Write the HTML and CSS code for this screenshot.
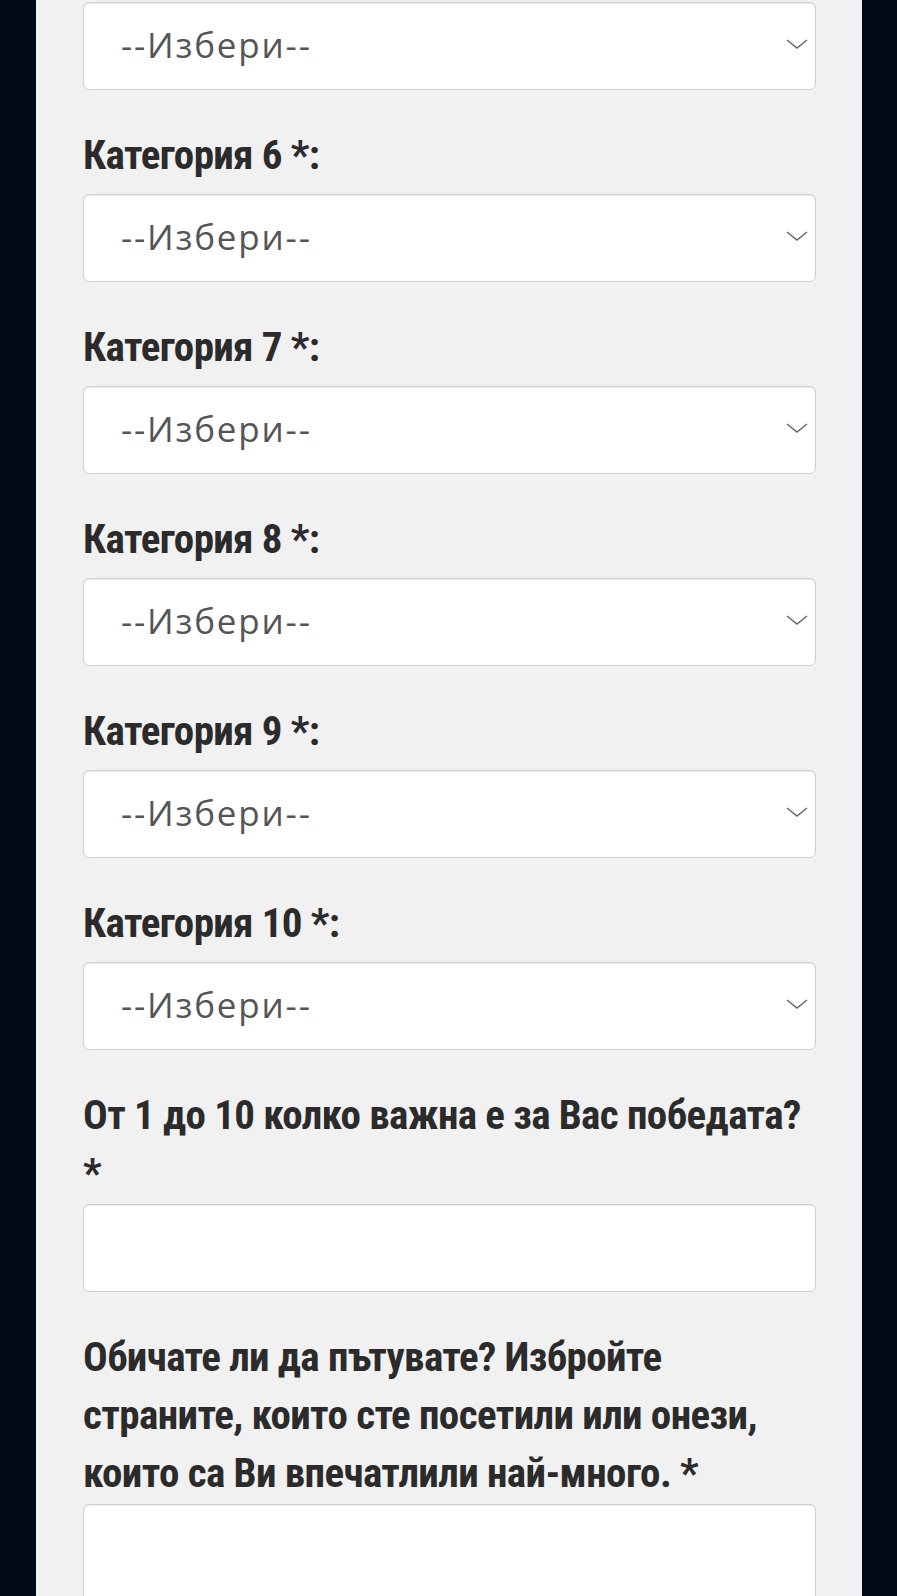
FILE: index.html
```html
<!DOCTYPE html>
<html lang="bg">
<head>
<meta charset="utf-8">
<title>Анкета</title>
<link rel="stylesheet" href="styles.css">
</head>
<body>
<div class="page">
  <form class="form">
    <div class="field field-select">
      <div class="select-wrap">
        <select class="control select" name="cat5"><option>--Избери--</option></select>
        <svg class="chevron" width="22" height="10" viewBox="0 0 22 10"><polyline points="1,1 11,9 21,1" fill="none" stroke="#666" stroke-width="1.5"/></svg>
      </div>
    </div>
    <div class="field field-select">
      <label class="label">Категория 6 *:</label>
      <div class="select-wrap">
        <select class="control select" name="cat6"><option>--Избери--</option></select>
        <svg class="chevron" width="22" height="10" viewBox="0 0 22 10"><polyline points="1,1 11,9 21,1" fill="none" stroke="#666" stroke-width="1.5"/></svg>
      </div>
    </div>
    <div class="field field-select">
      <label class="label">Категория 7 *:</label>
      <div class="select-wrap">
        <select class="control select" name="cat7"><option>--Избери--</option></select>
        <svg class="chevron" width="22" height="10" viewBox="0 0 22 10"><polyline points="1,1 11,9 21,1" fill="none" stroke="#666" stroke-width="1.5"/></svg>
      </div>
    </div>
    <div class="field field-select">
      <label class="label">Категория 8 *:</label>
      <div class="select-wrap">
        <select class="control select" name="cat8"><option>--Избери--</option></select>
        <svg class="chevron" width="22" height="10" viewBox="0 0 22 10"><polyline points="1,1 11,9 21,1" fill="none" stroke="#666" stroke-width="1.5"/></svg>
      </div>
    </div>
    <div class="field field-select">
      <label class="label">Категория 9 *:</label>
      <div class="select-wrap">
        <select class="control select" name="cat9"><option>--Избери--</option></select>
        <svg class="chevron" width="22" height="10" viewBox="0 0 22 10"><polyline points="1,1 11,9 21,1" fill="none" stroke="#666" stroke-width="1.5"/></svg>
      </div>
    </div>
    <div class="field field-select">
      <label class="label">Категория 10 *:</label>
      <div class="select-wrap">
        <select class="control select" name="cat10"><option>--Избери--</option></select>
        <svg class="chevron" width="22" height="10" viewBox="0 0 22 10"><polyline points="1,1 11,9 21,1" fill="none" stroke="#666" stroke-width="1.5"/></svg>
      </div>
    </div>
    <div class="field field-text">
      <label class="label">От 1 до 10 колко важна е за Вас победата? *</label>
      <input class="control input" type="text" name="importance">
    </div>
    <div class="field field-text">
      <label class="label">Обичате ли да пътувате? Избройте<br>страните, които сте посетили или онези, които са Ви впечатлили най-много. *</label>
      <textarea class="control textarea" name="travel"></textarea>
    </div>
  </form>
</div>
</body>
</html>
```
FILE: styles.css
```css
html, body {
  margin: 0;
  padding: 0;
}
body {
  background: #020a17;
}
.page {
  margin: 0 35px 0 36px;
  background: #f1f1f1;
  padding: 2px 46px 120px 47px;
  min-height: 1596px;
  box-sizing: border-box;
}
.form {
  display: flex;
  flex-direction: column;
}
.field {
  display: flex;
  flex-direction: column;
}
.field + .field {
  margin-top: 36px;
}
.label {
  display: block;
  font-family: "Roboto Condensed", Roboto, "Liberation Sans", sans-serif;
  font-weight: 700;
  font-size: 41px;
  letter-spacing: -0.6px;
  line-height: 58px;
  color: #2b2b2b;
}
.field-select .label {
  margin-bottom: 10px;
}
.field-text .label {
  margin-bottom: 2px;
}
.select-wrap {
  position: relative;
}
.control {
  display: block;
  width: 100%;
  box-sizing: border-box;
  margin: 0;
  background: #fff;
  border: 1px solid #cfcfcf;
  border-radius: 6px;
  box-shadow: inset 0 1px 1px rgba(0, 0, 0, 0.075);
  outline: none;
}
.select {
  -webkit-appearance: none;
  appearance: none;
  height: 88px;
  padding: 0 50px 3px 37px;
  font-family: "Open Sans", "Noto Sans", sans-serif;
  font-size: 35px;
  letter-spacing: 1.8px;
  color: #555;
}
.chevron {
  position: absolute;
  right: 8px;
  top: 37px;
  display: block;
}
.input {
  height: 88px;
  padding: 0 20px;
}
.textarea {
  height: 160px;
  resize: none;
  padding: 20px;
}
```
